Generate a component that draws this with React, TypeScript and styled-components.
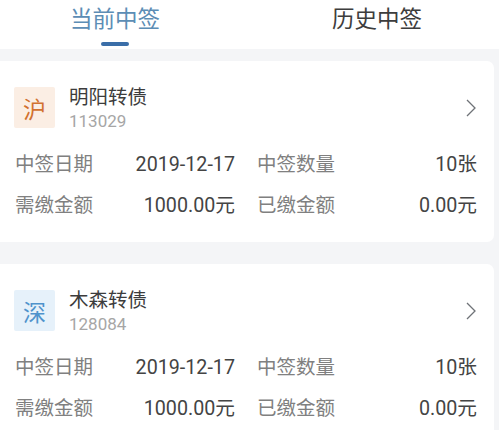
import styled, { createGlobalStyle } from "styled-components";

const GlobalStyle = createGlobalStyle`
  html, body {
    margin: 0;
    padding: 0;
    height: 100%;
    overflow: hidden;
    background: #f4f5f7;
  }
  * {
    box-sizing: border-box;
  }
`;

const FONT = `Roboto, "Noto Sans CJK SC", sans-serif`;

const bonds = [
  { market: "沪", tone: "sh", name: "明阳转债", code: "113029" },
  { market: "深", tone: "sz", name: "木森转债", code: "128084" },
] as const;

const ChevronIcon = () => (
  <Chevron viewBox="0 0 10 18" fill="none">
    <path d="M1 1l8 8-8 8" stroke="#6f7277" strokeWidth="1.3" />
  </Chevron>
);

export default function App() {
  return (
    <Page>
      <GlobalStyle />
      <Tabs>
        <Tab $active>
          当前中签
          <TabMark />
        </Tab>
        <Tab>历史中签</Tab>
      </Tabs>
      <List>
        {bonds.map((bond) => (
          <Card key={bond.code}>
            <CardHead>
              <Market $tone={bond.tone}>{bond.market}</Market>
              <Titles>
                <Name>{bond.name}</Name>
                <Code>{bond.code}</Code>
              </Titles>
              <ChevronIcon />
            </CardHead>
            <Details>
              <Pair>
                <Label>中签日期</Label>
                <Value>2019-12-17</Value>
              </Pair>
              <Pair>
                <Label>中签数量</Label>
                <Value>10张</Value>
              </Pair>
              <Pair>
                <Label>需缴金额</Label>
                <Value>1000.00元</Value>
              </Pair>
              <Pair>
                <Label>已缴金额</Label>
                <Value>0.00元</Value>
              </Pair>
            </Details>
          </Card>
        ))}
      </List>
    </Page>
  );
}

const Page = styled.div`
  width: 499px;
  height: 430px;
  overflow: hidden;
  font-family: ${FONT};
`;

const Tabs = styled.div`
  display: grid;
  grid-template-columns: 230px 244px;
  column-gap: 25px;
  height: 49px;
  background: #fff;
`;

const Tab = styled.div<{ $active?: boolean }>`
  position: relative;
  text-align: center;
  font-size: 22.5px;
  line-height: 38px;
  color: ${({ $active }) => ($active ? "#5c8db5" : "#3d3d3d")};
`;

const TabMark = styled.span`
  position: absolute;
  left: 101px;
  top: 42px;
  width: 28px;
  height: 4px;
  border-radius: 2px;
  background: #3a6ea8;
`;

const List = styled.div`
  display: flex;
  flex-direction: column;
  gap: 22px;
  padding: 12px 5px 0 0;
`;

const Card = styled.section`
  height: 181px;
  padding: 26px 18px 0 15px;
  background: #fff;
  border-radius: 0 7px 7px 0;
`;

const CardHead = styled.div`
  display: flex;
  align-items: center;
  height: 41px;
  margin-left: -1px;
`;

const Market = styled.div<{ $tone: "sh" | "sz" }>`
  display: flex;
  align-items: center;
  justify-content: center;
  flex: none;
  width: 41px;
  height: 41px;
  border-radius: 2px;
  font-size: 23px;
  background: ${({ $tone }) => ($tone === "sh" ? "#fbeee4" : "#e6f1fa")};
  color: ${({ $tone }) => ($tone === "sh" ? "#d2712f" : "#4f93cc")};
`;

const Titles = styled.div`
  flex: 1;
  margin-left: 14px;
  padding-top: 2px;
`;

const Name = styled.div`
  font-size: 19.5px;
  line-height: 26px;
  color: #3c3c3c;
`;

const Code = styled.div`
  font-size: 17px;
  line-height: 22px;
  margin-top: -1px;
  color: #a6a6a6;
`;

const Chevron = styled.svg`
  flex: none;
  width: 10px;
  height: 18px;
`;

const Details = styled.div`
  display: grid;
  grid-template-columns: 220px 220px;
  column-gap: 22px;
  row-gap: 13px;
  margin-top: 23px;
`;

const Pair = styled.div`
  display: flex;
  justify-content: space-between;
  font-size: 19.5px;
  line-height: 28px;
`;

const Label = styled.span`
  color: #808080;
`;

const Value = styled.span`
  font-size: 19.7px;
  color: #444;
`;
